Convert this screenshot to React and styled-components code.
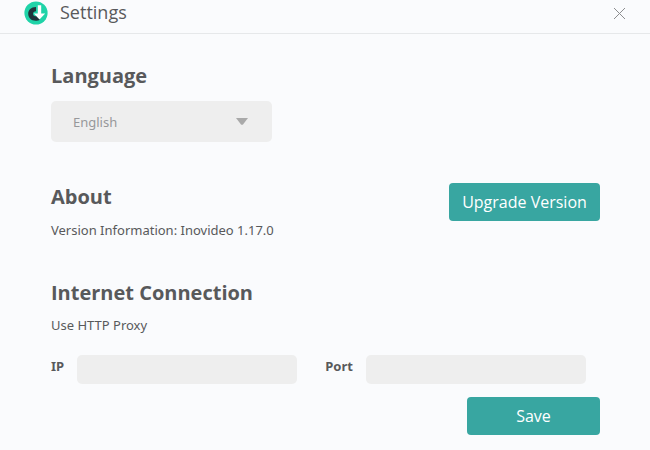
import { useState } from 'react';
import styled, { createGlobalStyle } from 'styled-components';

const GlobalStyle = createGlobalStyle`
  * {
    box-sizing: border-box;
  }

  body {
    margin: 0;
    background-color: #fafbfd;
    color: #58595b;
    font-family: 'Noto Sans', 'Open Sans', sans-serif;
  }

  button,
  input,
  select {
    font-family: inherit;
  }
`;

const Header = styled.header`
  display: flex;
  align-items: center;
  height: 34px;
  padding: 1px 24px 8px;
  border-bottom: 1px solid #e6e8ea;
`;

const Title = styled.h1`
  flex: 1;
  margin: 0 0 2px 12px;
  font-family: 'Open Sans', sans-serif;
  font-size: 18px;
  line-height: 24px;
  font-weight: 400;
`;

const CloseButton = styled.button`
  display: flex;
  padding: 0;
  border: none;
  background: none;
  color: #8c8d8f;
  cursor: pointer;
`;

const Main = styled.main`
  display: flex;
  flex-direction: column;
  gap: 38px;
  padding: 28px 50px 16px 51px;
`;

const Section = styled.section`
  display: flex;
  justify-content: space-between;
  align-items: flex-start;
`;

const Heading = styled.h2`
  margin: 0 0 ${(props) => props.$gap || '8px'};
  font-family: 'Open Sans', sans-serif;
  font-size: 20px;
  line-height: 28px;
  font-weight: 700;
`;

const Text = styled.p`
  margin: 0;
  font-size: 13px;
  line-height: 22px;
`;

const SelectBox = styled.div`
  position: relative;
  width: 221px;
  margin-bottom: 3px;

  svg {
    position: absolute;
    top: 17px;
    right: 24px;
    pointer-events: none;
  }
`;

const Select = styled.select`
  display: block;
  width: 100%;
  height: 41px;
  padding: 0 48px 0 22px;
  border: none;
  border-radius: 5px;
  background-color: #eeeeee;
  color: #97989a;
  font-size: 13px;
  appearance: none;
`;

const Button = styled.button`
  width: ${(props) => props.$width};
  height: 38px;
  padding: 0;
  border: none;
  border-radius: 4px;
  background-color: #38a6a1;
  color: #ffffff;
  font-family: 'Open Sans', sans-serif;
  font-size: 16px;
  cursor: pointer;

  &:hover {
    background-color: #2f938f;
  }
`;

const ProxyForm = styled.form`
  flex: 1;
`;

const Fields = styled.div`
  display: grid;
  grid-template-columns: auto 1fr auto 1fr;
  align-items: start;
  column-gap: 13px;
  margin: 19px 14px 13px 0;
`;

const Label = styled.label`
  font-size: 13px;
  line-height: 22px;
  font-weight: 700;

  &:not(:first-child) {
    margin-left: 15px;
  }
`;

const Input = styled.input`
  width: 100%;
  height: 29px;
  padding: 0 10px;
  border: none;
  border-radius: 5px;
  background-color: #eeeeee;
  color: #58595b;
  font-size: 13px;
`;

const Actions = styled.div`
  display: flex;
  justify-content: flex-end;
`;

function Logo() {
  return (
    <svg width="24" height="24" viewBox="0 0 24 24" aria-hidden="true">
      <circle cx="12" cy="12" r="11.6" fill="#1fd3a8" />
      <path
        d="M12 6 C7 6 4.2 9 4.2 12.8 C4.2 17 7.4 19.8 11.6 19.8 C13.4 19.8 14.8 19.4 16 18.4 L12.6 15 C10.6 15.8 9 14.6 9 12.8 C9 11.2 10.2 10.2 12 10.2 Z"
        fill="#20333b"
      />
      <path d="M13.8 4.2h3.4v8.2h4L15.5 18.4 9.8 12.4h4z" fill="#ffffff" />
    </svg>
  );
}

export default function App() {
  const [language, setLanguage] = useState('en');
  const [ip, setIp] = useState('');
  const [port, setPort] = useState('');

  return (
    <>
      <GlobalStyle />
      <Header>
        <Logo />
        <Title>Settings</Title>
        <CloseButton type="button" aria-label="Close">
          <svg width="13" height="13" viewBox="0 0 13 13" stroke="currentColor">
            <path d="M1 1l11 11M12 1L1 12" />
          </svg>
        </CloseButton>
      </Header>

      <Main>
        <Section>
          <div>
            <Heading $gap="11px">
              <label htmlFor="language">Language</label>
            </Heading>
            <SelectBox>
              <Select
                id="language"
                value={language}
                onChange={(e) => setLanguage(e.target.value)}
              >
                <option value="en">English</option>
              </Select>
              <svg width="12" height="7" viewBox="0 0 12 7" aria-hidden="true">
                <path d="M0 0h12L7 6.4q-1 .9-2 0z" fill="#a9a9a9" />
              </svg>
            </SelectBox>
          </div>
        </Section>

        <Section>
          <div>
            <Heading>About</Heading>
            <Text>Version Information: Inovideo 1.17.0</Text>
          </div>
          <Button type="button" $width="151px">Upgrade Version</Button>
        </Section>

        <Section>
          <ProxyForm onSubmit={(e) => e.preventDefault()}>
            <Heading $gap="7px">Internet Connection</Heading>
            <Text>Use HTTP Proxy</Text>
            <Fields>
              <Label htmlFor="ip">IP</Label>
              <Input id="ip" value={ip} onChange={(e) => setIp(e.target.value)} />
              <Label htmlFor="port">Port</Label>
              <Input id="port" value={port} onChange={(e) => setPort(e.target.value)} />
            </Fields>
            <Actions>
              <Button type="submit" $width="133px">Save</Button>
            </Actions>
          </ProxyForm>
        </Section>
      </Main>
    </>
  );
}
